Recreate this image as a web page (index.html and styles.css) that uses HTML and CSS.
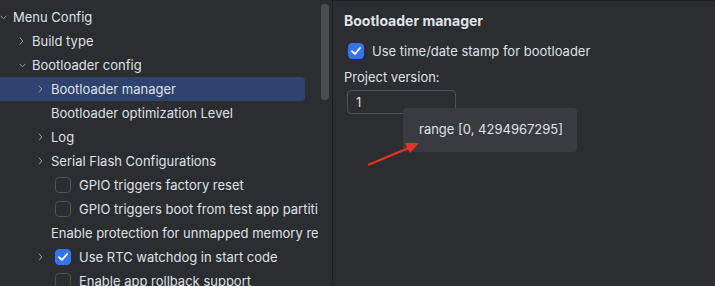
FILE: index.html
```html
<!DOCTYPE html>
<html lang="en">
<head>
    <meta charset="UTF-8">
    <title>Menu Config</title>
    <link rel="stylesheet" href="styles.css">
</head>
<body>
    <div class="window">
        <div class="tree-panel">
            <div class="tree">
                <div class="row lvl0"><span class="chev"><svg width="7" height="5" viewBox="0 0 7 5"><path d="M0.5 0.8 L3.5 3.8 L6.5 0.8" /></svg></span>Menu Config</div>
                <div class="row lvl1"><span class="chev"><svg width="5" height="8" viewBox="0 0 5 8"><path d="M0.8 0.5 L3.8 4 L0.8 7.5" /></svg></span>Build type</div>
                <div class="row lvl1"><span class="chev"><svg width="7" height="5" viewBox="0 0 7 5"><path d="M0.5 0.8 L3.5 3.8 L6.5 0.8" /></svg></span>Bootloader config</div>
                <div class="row lvl2 selected"><span class="chev"><svg width="5" height="8" viewBox="0 0 5 8"><path d="M0.8 0.5 L3.8 4 L0.8 7.5" /></svg></span>Bootloader manager</div>
                <div class="row lvl2"><span class="chev"></span>Bootloader optimization Level</div>
                <div class="row lvl2"><span class="chev"><svg width="5" height="8" viewBox="0 0 5 8"><path d="M0.8 0.5 L3.8 4 L0.8 7.5" /></svg></span>Log</div>
                <div class="row lvl2"><span class="chev"><svg width="5" height="8" viewBox="0 0 5 8"><path d="M0.8 0.5 L3.8 4 L0.8 7.5" /></svg></span>Serial Flash Configurations</div>
                <div class="row lvl2"><span class="chev"></span><span class="box"></span>GPIO triggers factory reset</div>
                <div class="row lvl2"><span class="chev"></span><span class="box"></span>GPIO triggers boot from test app partition</div>
                <div class="row lvl2"><span class="chev"></span>Enable protection for unmapped memory regions</div>
                <div class="row lvl2"><span class="chev"><svg width="5" height="8" viewBox="0 0 5 8"><path d="M0.8 0.5 L3.8 4 L0.8 7.5" /></svg></span><span class="box checked"><svg width="16" height="16" viewBox="0 0 16 16"><path d="M4 8.2 L7 11 L12 5" /></svg></span>Use RTC watchdog in start code</div>
                <div class="row lvl2"><span class="chev"></span><span class="box"></span>Enable app rollback support</div>
            </div>
            <div class="scrollbar"></div>
        </div>
        <div class="detail-panel">
            <div class="detail-title">Bootloader manager</div>
            <div class="option">
                <span class="box checked"><svg width="16" height="16" viewBox="0 0 16 16"><path d="M4 8.2 L7 11 L12 5" /></svg></span>
                Use time/date stamp for bootloader
            </div>
            <div class="field-label">Project version:</div>
            <div class="field-input">1</div>
            <div class="tooltip">range [0, 4294967295]</div>
            <svg class="arrow" width="60" height="30" viewBox="0 0 60 30">
                <path d="M1 28 L44 10" />
                <polygon points="52,6 38,6 43,16" />
            </svg>
        </div>
    </div>
</body>
</html>
```

FILE: styles.css
```css
body {
    margin: 0;
    background: #2b2d30;
    font-family: Inter, "Noto Sans", sans-serif;
    font-size: 13px;
    color: #dfe1e5;
    overflow: hidden;
}
.window {
    display: flex;
    width: 715px;
    height: 286px;
}
.tree-panel {
    position: relative;
    width: 332px;
    flex-shrink: 0;
    border-right: 1px solid #1e1f22;
    overflow: hidden;
}
.tree {
    padding-top: 5px;
    width: 318px;
    overflow: hidden;
}
.row {
    display: flex;
    align-items: center;
    height: 24px;
    white-space: nowrap;
}
.lvl0 { padding-left: 0; }
.lvl1 { padding-left: 19px; }
.lvl2 { padding-left: 38px; }
.selected {
    background: #2e436e;
    width: 305px;
    box-sizing: border-box;
    border-radius: 0 4px 4px 0;
}
.chev {
    width: 13px;
    flex-shrink: 0;
    display: flex;
    align-items: center;
}
.chev svg path {
    fill: none;
    stroke: #9a9da2;
    stroke-width: 1;
}
.box {
    width: 16px;
    height: 16px;
    flex-shrink: 0;
    margin: 0 8px 0 4px;
    box-sizing: border-box;
    border: 1px solid #4e5157;
    border-radius: 4px;
}
.box.checked {
    background: #3574f0;
    border-color: #3574f0;
    display: flex;
    align-items: center;
    justify-content: center;
}
.box svg {
    margin: -1px;
}
.box svg path {
    fill: none;
    stroke: #ffffff;
    stroke-width: 1.8;
    stroke-linecap: round;
    stroke-linejoin: round;
}
.scrollbar {
    position: absolute;
    left: 321px;
    top: 4px;
    width: 8px;
    height: 96px;
    border-radius: 4px;
    background: #4b4d51;
}
.detail-panel {
    position: relative;
    flex: 1;
    padding: 11px 0 0 11px;
    border-top: 1px solid #1e1f22;
}
.detail-title {
    font-size: 14px;
    font-weight: 700;
    height: 17px;
    line-height: 17px;
}
.option {
    display: flex;
    align-items: center;
    height: 24px;
    margin-top: 10px;
}
.option .box {
    margin-left: 4px;
}
.field-label {
    margin-top: 6px;
    line-height: 16px;
}
.field-input {
    margin: 5px 0 0 3px;
    width: 109px;
    height: 24px;
    line-height: 22px;
    box-sizing: border-box;
    border: 1px solid #4e5157;
    border-radius: 4px;
    padding-left: 8px;
}
.tooltip {
    position: absolute;
    left: 70px;
    top: 107px;
    width: 174px;
    height: 44px;
    box-sizing: border-box;
    padding-left: 16px;
    line-height: 43px;
    background: #393b40;
    border-radius: 4px;
}
.arrow {
    position: absolute;
    left: 34px;
    top: 136px;
}
.arrow path {
    stroke: #e5332a;
    stroke-width: 2;
}
.arrow polygon {
    fill: #e5332a;
}
```
